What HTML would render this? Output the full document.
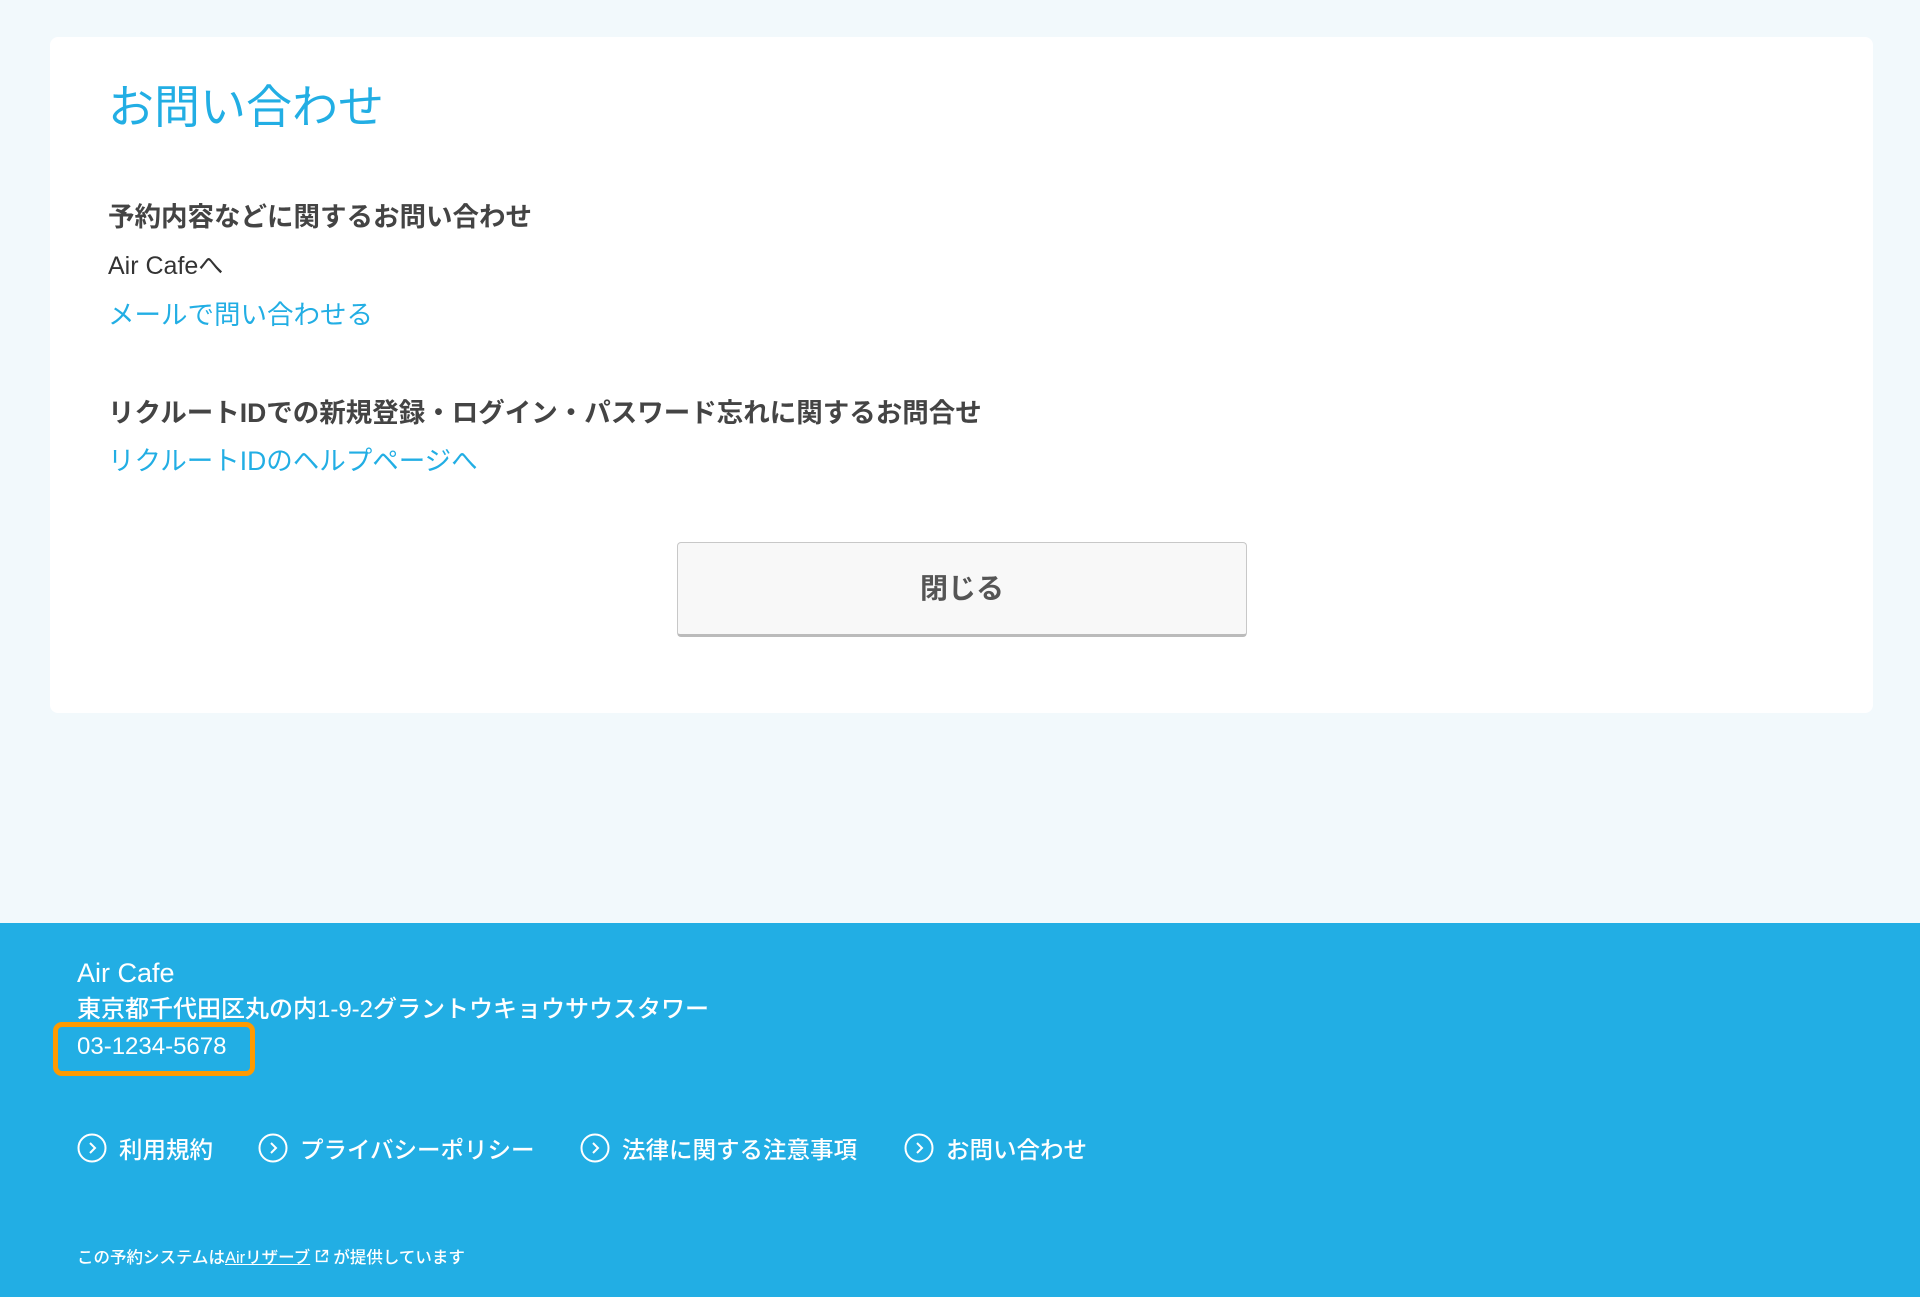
<!DOCTYPE html>
<html><head><meta charset="utf-8"><style>
*{margin:0;padding:0;box-sizing:border-box}
body{width:1920px;height:1297px;background:#f2f9fc;font-family:"Liberation Sans","Noto Sans CJK JP",sans-serif;position:relative;overflow:hidden}
.card{position:absolute;left:50px;top:37px;width:1823px;height:676px;background:#fff;border-radius:8px}
.a{position:absolute;white-space:nowrap;line-height:1}
.t{left:108px;top:84px;font-size:46px;color:#22aee4}
.h{font-size:26.5px;font-weight:bold;color:#444;left:108px}
.p{font-size:25px;color:#333;left:108px}
.l{font-size:26.5px;color:#22aee4;left:108px}
.btn{position:absolute;left:677px;top:542px;width:570px;height:95px;background:#f8f8f8;border:1px solid #c8c8c8;border-bottom:3px solid #bbb;border-radius:4px;text-align:center;line-height:92px;font-size:28px;font-weight:bold;color:#555}
.foot{position:absolute;left:0;top:923px;width:1920px;height:374px;background:#22aee4;color:#fff}
.box{position:absolute;left:53px;top:1022px;width:202px;height:54px;border:5px solid #ff9a00;border-radius:9px}
.nav{position:absolute;top:1131px;display:flex;align-items:center;font-size:23.5px;color:#fff;font-weight:500}
.nav svg{margin-right:12px}
</style></head><body>
<div class="card"></div>
<div class="a t">お問い合わせ</div>
<div class="a h" style="top:204px">予約内容などに関するお問い合わせ</div>
<div class="a p" style="top:254px">Air Cafeへ</div>
<div class="a l" style="top:302px">メールで問い合わせる</div>
<div class="a h" style="top:400px">リクルートIDでの新規登録・ログイン・パスワード忘れに関するお問合せ</div>
<div class="a l" style="top:448px">リクルートIDのヘルプページへ</div>
<div class="btn">閉じる</div>
<div class="foot"></div>
<div class="a" style="left:77px;top:960px;font-size:27px;color:#fff">Air Cafe</div>
<div class="a" style="left:77px;top:998px;font-size:24px;color:#fff;font-weight:500">東京都千代田区丸の内1-9-2グラントウキョウサウスタワー</div>
<div class="a" style="left:77px;top:1035px;font-size:24px;color:#fff">03-1234-5678</div>
<div class="box"></div>
<div class="nav" style="left:77px"><svg width="30" height="30" viewBox="0 0 30 30"><circle cx="15" cy="15" r="13.5" fill="none" stroke="#fff" stroke-width="2"/><path d="M13 10l5 5-5 5" fill="none" stroke="#fff" stroke-width="2"/></svg>利用規約</div>
<div class="nav" style="left:258px"><svg width="30" height="30" viewBox="0 0 30 30"><circle cx="15" cy="15" r="13.5" fill="none" stroke="#fff" stroke-width="2"/><path d="M13 10l5 5-5 5" fill="none" stroke="#fff" stroke-width="2"/></svg>プライバシーポリシー</div>
<div class="nav" style="left:580px"><svg width="30" height="30" viewBox="0 0 30 30"><circle cx="15" cy="15" r="13.5" fill="none" stroke="#fff" stroke-width="2"/><path d="M13 10l5 5-5 5" fill="none" stroke="#fff" stroke-width="2"/></svg>法律に関する注意事項</div>
<div class="nav" style="left:904px"><svg width="30" height="30" viewBox="0 0 30 30"><circle cx="15" cy="15" r="13.5" fill="none" stroke="#fff" stroke-width="2"/><path d="M13 10l5 5-5 5" fill="none" stroke="#fff" stroke-width="2"/></svg>お問い合わせ</div>
<div class="a" style="left:77px;top:1249px;font-size:16.5px;color:#fff;font-weight:500">この予約システムは<span style="text-decoration:underline">Airリザーブ</span> <svg width="14" height="14" viewBox="0 0 13 13"><path d="M5 2H1.5v9.5H11V8M7 1.5h4.5V6M11.5 1.5L6 7" fill="none" stroke="#fff" stroke-width="1.4"/></svg> が提供しています</div>
</body></html>
